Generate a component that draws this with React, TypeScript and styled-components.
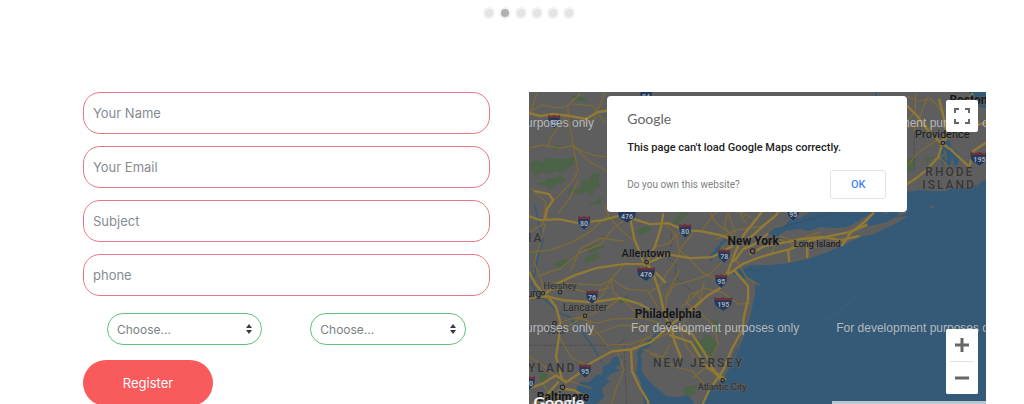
import React from "react";
import styled, { createGlobalStyle, css } from "styled-components";

const GlobalStyle = createGlobalStyle`
  *, *::before, *::after { box-sizing: border-box; }
  body { margin: 0; background: #fff; font-family: Inter, "Open Sans", sans-serif; }
  button, input, select { font: inherit; }
`;

const Page = styled.div`
  display: flex;
  flex-direction: column;
  height: 100vh;
  overflow: hidden;
`;

const Dots = styled.nav`
  display: flex;
  flex-shrink: 0;
  justify-content: center;
  gap: 4px;
  padding: 7px 0 73px 33px;
`;

const Dot = styled.button<{ $active?: boolean }>`
  width: 12px;
  height: 12px;
  padding: 0;
  border: 2px solid #f2f2f2;
  border-radius: 50%;
  background: ${(p) => (p.$active ? "#b0b0b0" : "#e4e4e4")};
`;

const Contact = styled.main`
  display: grid;
  grid-template-columns: minmax(0, 8fr) minmax(0, 9fr);
  column-gap: 39px;
  padding: 0 38px 0 83px;
`;

const Form = styled.form`
  display: flex;
  flex-direction: column;
  gap: 12px;
`;

const Field = styled.input`
  height: 42px;
  padding: 0 9px;
  border: 1px solid #e87884;
  border-radius: 17px;
  outline: none;
  background: #fff;
  color: #495057;
  font-size: 13px;
  &::placeholder { color: #858b91; opacity: 1; }
`;

const SelectRow = styled.div`
  display: grid;
  grid-template-columns: 1fr 1fr;
  padding: 5px 0 3px;
`;

const SelectBox = styled.div`
  display: grid;
  align-items: center;
  margin: 0 24px;
  & > * { grid-area: 1 / 1; }
  svg { justify-self: end; margin-right: 10px; pointer-events: none; z-index: 1; }
`;

const Select = styled.select`
  appearance: none;
  width: 100%;
  height: 32px;
  padding: 0 9px;
  border: 1px solid #66c07c;
  border-radius: 16px;
  background: #fff;
  color: #7b8187;
  font-size: 12px;
`;

const Register = styled.button`
  align-self: flex-start;
  width: 130px;
  height: 46px;
  border: 0;
  border-radius: 23px;
  background: #f95a5c;
  color: #fff;
  font-size: 13px;
`;

const MapPanel = styled.section`
  position: relative;
  min-height: 320px;
  overflow: hidden;
  background: #345a77;
  font-family: Roboto, sans-serif;
`;

const MapArt = styled.svg`
  position: absolute;
  inset: 0;
  width: 100%;
  height: 100%;
`;

const Dialog = styled.div`
  position: absolute;
  top: 4px;
  left: 50%;
  width: 300px;
  transform: translateX(-50%);
  padding: 14px 21px 13px 20px;
  border-radius: 4px;
  background: #fff;
`;

const brand = css`
  font-family: Lato, sans-serif;
  line-height: 18px;
`;

const DialogBrand = styled.div`
  ${brand}
  color: #666;
  font-size: 14px;
`;

const DialogTitle = styled.p`
  margin: 11px 0 13px;
  color: #222;
  font-size: 11px;
  font-weight: 500;
  line-height: 18px;
`;

const DialogFooter = styled.div`
  display: flex;
  align-items: center;
  justify-content: space-between;
`;

const OwnerLink = styled.a`
  color: #808080;
  font-size: 10px;
  text-decoration: none;
`;

const OkButton = styled.button`
  width: 56px;
  height: 29px;
  border: 1px solid #e4e4e4;
  border-radius: 3px;
  background: #fff;
  color: #4a86ee;
  font-size: 11px;
  font-weight: 500;
`;

const Control = styled.button`
  display: grid;
  place-items: center;
  width: 32px;
  height: 32px;
  padding: 0;
  border: 0;
  border-radius: 2px;
  background: #fff;
`;

const FullscreenSlot = styled.div`
  position: absolute;
  top: 8px;
  right: 8px;
`;

const ZoomControls = styled.div`
  position: absolute;
  right: 8px;
  bottom: 18px;
  border-radius: 2px;
  background: #fff;
`;

const Divider = styled.div`
  height: 1px;
  margin: 0 4px;
  background: #e2e2e2;
`;

const MapBrand = styled.a`
  ${brand}
  position: absolute;
  left: 5px;
  bottom: 1px;
  color: #f0f0f0;
  font-size: 16px;
  font-weight: 700;
  text-decoration: none;
`;

const LegalStrip = styled.div`
  position: absolute;
  right: 0;
  bottom: 0;
  width: 154px;
  height: 11px;
  background: #b9c7d1;
`;

const water = [
  // Atlantic, Long Island Sound and the New Jersey shore
  "M986 179L977 185L966 188L953 188L945 191L933 191L920 190L907 192L870 198L830 206L810 212L800 218L791 219L783 227L773 229L768 234L778 236L785 231L790 230L800 229L808 231L820 227L834 228L847 227L858 221L873 212L876 211L867 222L868 226L887 222L895 217L908 216L893 225L873 234L862 236L847 243L827 252L807 259L787 263L767 265L750 265L743 268L735 270L733 272L740 278L752 279L755 283L755 293L751 312L746 330L742 340L735 358L728 370L722 380L710 390L700 403L697 413L986 413Z",
  "M658 331L644 344L637 352L638 362L636 372L641 382L642 393L646 413L700 413L692 400L688 395L675 397L667 396L658 389L648 380L641 370L642 360L640 354L648 347L660 335Z",
  "M575 413L570 404L578 396L576 389L580 382L589 382L597 374L602 375L603 366L610 363L613 357L622 356L620 364L615 368L621 370L612 373L606 378L610 381L602 388L604 397L596 404L594 413Z",
  "M946 132L942 144L940 155L942 166L946 160L948 170L952 158L955 168L959 160L956 150L951 151L950 143Z",
  "M968 92L971 98L979 107L986 108L986 92Z",
  "M710 256L715 249L720 243L724 238L727 240L721 246L717 254L710 262Z",
];

const rivers = [
  "M535 205L539 224L543 240L538 256L535 272L531 284L540 296L549 303L558 312L570 317L582 332L592 345L602 362",
  "M658 333L669 328L678 322",
  "M712 165L710 182L714 203",
  "M875 92L880 110L878 150",
  "M738 340L742 322M729 366L737 348M733 374L742 352",
];

const islands = [
  "M898 212L904 210L906 213L899 216Z",
  "M929 207L933 205L933 209Z",
  "M880 213L886 211L888 214Z",
  "M967 184L973 180L975 183Z",
  "M943 151L945 149L947 158L945 161Z",
];

const greens = [
  "M529 165L536 160L543 163L546 158L555 159L561 160L573 157L575 163L566 169L560 173L556 170L549 174L543 171L535 175ZM553 147L558 145L560 148L555 149Z",
  "M537 184L545 182L548 178L557 178L560 175L565 181L556 184L549 189L544 185ZM568 193L573 187L580 190L584 179L589 182L593 173L599 174L598 181L600 186L594 189L592 195L586 191L578 194L574 191Z",
  "M586 248L599 244L604 247L590 252ZM554 264L566 259L571 261L559 267ZM584 258L597 253L600 257L586 263Z",
  "M620 300L628 295L626 301L620 303ZM636 231L647 226L652 229L640 234ZM676 218L683 211L688 213L678 223L671 225Z",
  "M695 338L702 341L704 335L710 336L717 345L712 357L706 352L699 354L693 345Z",
  "M686 387L696 385L694 393L688 397L683 391ZM644 390L650 386L652 393L645 396ZM541 371L547 375L545 383L540 380ZM713 319L721 326L717 333L713 328Z",
  "M907 160L915 157L913 169L907 172ZM925 159L933 157L927 163ZM572 95L583 98L587 102L575 99ZM589 205L602 198L600 204Z",
];

const majorRoads = [
  "M529 216L540 220L559 219L578 223L603 220L621 215L650 224L668 223L684 230L700 231L720 235L739 242",
  "M545 219L547 209L553 200L549 194L535 191",
  "M529 113L540 116L553 114L570 116L586 119L598 112L612 110",
  "M525 298L546 296L563 300L592 302L620 298L640 304L655 312L670 316",
  "M543 296L556 284L575 275L596 268L623 264L645 264L667 254L690 258L712 257L732 246",
  "M546 297L535 283L529 272M548 296L556 307L560 321L559 337L556 356L562 379",
  "M529 388L543 383L556 375L566 382L578 374L592 362L612 351L632 349L651 342L668 327L681 317L694 307L708 295L720 288L728 271L736 250L744 234L757 218L762 211",
  "M562 386L554 404L552 412M558 382L545 397L530 406M561 388L574 390L585 396",
  "M648 265L654 276L660 294L665 317L671 325L674 340L681 358M655 272L665 282",
  "M735 271L748 286L748 299L744 315L742 330L732 348L723 370L709 390L699 411",
  "M675 326L692 334L704 352L714 370L720 379M670 335L691 342L705 365L725 379",
  "M631 350L632 371L639 386L648 401L649 412",
  "M722 277L731 272L742 264L757 258L770 254L790 249L809 241L829 236L849 232L866 225",
  "M750 254L764 246L781 243L801 239L822 237L841 240L858 236M788 250L789 261M807 245L807 257",
  "M739 244L752 236L765 224L776 215L783 205M734 261L743 249L757 243L767 234",
  "M645 265L655 246L661 227L663 214M630 217L634 238L643 261",
  "M907 106L917 116L928 131L941 143L955 132L966 126L986 123M942 143L938 157L926 170L916 178L907 184",
  "M939 100L943 116L946 132L941 143L951 150L969 167L973 151L985 143M972 94L960 111L944 127",
  "M842 245L850 233L864 222L873 213",
];

const minorRoads = [
  "M529 112L542 105L560 108L567 106L580 94M568 106L568 115L572 137L573 147L592 155L607 157M573 145L578 171L572 182L554 200",
  "M529 148L542 145L560 148L575 145M575 147L590 162L607 171M567 115L552 136L548 145",
  "M574 104L593 106L605 123M605 92L600 106L594 113M537 93L531 110",
  "M531 188L546 202L543 224L529 232M578 180L570 198L558 213M597 117L588 123L582 123",
  "M545 224L539 248L534 262L541 279L545 295M541 275L561 268L579 253L601 244L613 228L626 219",
  "M529 252L550 250L572 242L591 231L607 216M571 270L580 249L600 238L623 241",
  "M605 205L609 217L622 231L633 240M626 262L611 279L602 295L588 310L575 322L559 332M611 280L613 292L629 305L641 319",
  "M553 282L580 284L600 285L612 279L627 289L648 291L657 306M546 291L570 288L591 293L610 287",
  "M620 298L607 308L586 316L570 319L559 323M577 318L597 323L612 319L642 318L661 323",
  "M585 318L595 330L607 345L631 344L652 335M591 335L620 325L649 327",
  "M555 376L543 365L529 356M560 338L572 358L585 364M543 383L552 400M563 379L573 382L591 388",
  "M665 224L676 235L679 250L690 259L702 272L721 282M702 230L713 215L721 207L728 213L735 233",
  "M648 292L660 286L667 272L676 260L682 246L693 233M655 247L669 243L682 229",
  "M664 315L667 297L674 285L690 281L708 275L722 262L730 249M679 270L671 286L665 297",
  "M699 291L689 295L687 303L694 309L701 303L698 294M681 307L703 288L722 292L739 304L749 303",
  "M722 246L735 258L746 277L759 285M727 214L724 226L735 240L746 247L752 233M716 239L735 230L763 226",
  "M704 282L700 301L689 314L680 329L687 348L699 363L719 377M670 344L663 357L643 349",
  "M694 307L714 326L718 344L707 366L693 377M650 353L679 368L691 370L709 389",
  "M617 350L624 370L617 386L609 412M634 350L646 338L658 338L681 326",
  "M734 235L722 228L714 221L709 211M745 222L739 211M751 218L735 208M780 236L794 241L820 232",
  "M770 257L777 239L800 246M789 250L798 238L823 236M808 249L829 242L846 241",
  "M907 96L917 101L931 99L941 111L959 110L968 120L960 130L943 133M927 98L920 116L913 132",
  "M907 127L926 125L938 139L916 154L909 164M915 94L915 111L908 120M939 157L957 177M943 155L929 165",
];

interface Place {
  text: string;
  x: number;
  y: number;
  size?: number;
  weight?: number;
  color?: string;
  dot?: [number, number];
}

const places: Place[] = [
  { text: "New York", x: 753, y: 245, size: 12, weight: 700, dot: [752.5, 251] },
  { text: "Philadelphia", x: 668, y: 318, size: 12, weight: 700, dot: [668.5, 324] },
  { text: "Baltimore", x: 563, y: 401, size: 12, weight: 700, dot: [562.5, 387] },
  { text: "Allentown", x: 646, y: 257, size: 11, weight: 500, dot: [646.5, 262] },
  { text: "Providence", x: 942, y: 138, size: 11, weight: 400, dot: [942.5, 143] },
  { text: "Boston", x: 968, y: 104, size: 12, weight: 700 },
  { text: "Hershey", x: 560, y: 289, size: 9, color: "#2b2b2b", dot: [560, 292] },
  { text: "Lancaster", x: 585, y: 311, size: 10, color: "#2b2b2b", dot: [585, 315.5] },
  { text: "York", x: 555, y: 334, size: 9, color: "#2b2b2b", dot: [554.5, 323] },
  { text: "urg", x: 534, y: 297, size: 10, color: "#222", dot: [543, 293] },
  { text: "Long Island", x: 817, y: 247, size: 9, weight: 500, color: "#222" },
  { text: "Atlantic City", x: 722, y: 390, size: 9, weight: 500, color: "#333", dot: [722.5, 380] },
];

const regions: Place[] = [
  { text: "NEW JERSEY", x: 653, y: 367 },
  { text: "YLAND", x: 528, y: 372 },
  { text: "RHODE", x: 925, y: 176 },
  { text: "ISLAND", x: 922, y: 189 },
  { text: "IA", x: 528, y: 242 },
];

const shields: [string, number, number][] = [
  ["80", 554, 121], ["80", 584, 222], ["476", 627, 215], ["80", 685, 230],
  ["78", 724, 255], ["476", 646, 273], ["95", 721, 280], ["76", 592, 296],
  ["195", 723, 303], ["95", 585, 370], ["70", 529, 382], ["195", 979, 158],
  ["95", 793, 213], ["84", 646, 95],
];

const Shield = ({ label, x, y }: { label: string; x: number; y: number }) => {
  const w = label.length > 2 ? 9 : 6;
  return (
    <g transform={`translate(${x} ${y})`}>
      <path
        d={`M${-w} -5Q${-w - 1} 3 ${-w / 2} 5L0 8L${w / 2} 5Q${w + 1} 3 ${w} -5Z`}
        fill="#24395b"
        stroke="#66707a"
        strokeWidth=".5"
      />
      <path d={`M${-w} -6L${-w / 2} -5L0 -6L${w / 2} -5L${w} -6V-3H${-w}Z`} fill="#6e3236" />
      <text y="3.5" fill="#a5acb4" fontSize="7" fontWeight="700" textAnchor="middle">{label}</text>
    </g>
  );
};

const MapDrawing = () => (
  <MapArt viewBox="529 92 457 320" preserveAspectRatio="xMinYMin slice" role="img" aria-label="Map">
    <rect x="529" y="92" width="460" height="322" fill="#5e5e5e" />
    {greens.map((d) => <path key={d} d={d} fill="#4d6348" strokeLinejoin="round" stroke="#4d6348" />)}
    {water.map((d) => <path key={d} d={d} fill="#345a77" strokeLinejoin="round" />)}
    {islands.map((d) => <path key={d} d={d} fill="#5e5e5e" />)}
    <g fill="none" strokeLinecap="round" strokeLinejoin="round">
      <g stroke="#345a77" strokeWidth="1.4">{rivers.map((d) => <path key={d} d={d} />)}</g>
      <g stroke="#444" strokeWidth=".6" strokeDasharray="3 2">
        <path d="M529 345H618L625 339M624 345L625 370L627 412M670 224L672 242L668 258L676 264L675 277L690 290" />
        <path d="M914 132V170M775 229L800 222L850 208M734 274L750 269L763 272M908 196L914 204" />
      </g>
      <path d="M820 325L860 294" stroke="#45647c" strokeWidth=".6" />
      <g stroke="#7f6b34" strokeWidth="1.2">{minorRoads.map((d) => <path key={d} d={d} />)}</g>
      <g stroke="#917a33" strokeWidth="2.4">{majorRoads.map((d) => <path key={d} d={d} />)}</g>
    </g>
    {shields.map(([label, x, y]) => <Shield key={`${x}-${y}`} label={label} x={x} y={y} />)}
    <g paintOrder="stroke" stroke="#646464" strokeWidth="1" strokeLinejoin="round">
      {regions.map((p) => (
        <text key={p.text} x={p.x} y={p.y} fill="#363636" fontSize="12" fontWeight="500" letterSpacing="2">
          {p.text}
        </text>
      ))}
      {places.map((p) => (
        <text key={p.text} x={p.x} y={p.y} fill={p.color ?? "#171717"} fontSize={p.size} fontWeight={p.weight} textAnchor="middle">
          {p.text}
        </text>
      ))}
    </g>
    {places.map((p) => p.dot && (
      <circle key={p.text} cx={p.dot[0]} cy={p.dot[1]} r={p.weight === 700 ? 2.3 : 1.8} fill="#666" stroke="#222" />
    ))}
    <g fill="#b4b8bb" fontFamily="Liberation Sans, sans-serif" fontSize="12">
      {[127, 332].map((y) => [426, 631, 836].map((x) => (
        <text key={`${x}-${y}`} x={x} y={y}>For development purposes only</text>
      )))}
    </g>
  </MapArt>
);

const Caret = () => (
  <svg width="6" height="10" viewBox="0 0 6 10" fill="#343a40" aria-hidden="true">
    <path d="M0 4L3 0L6 4ZM0 6H6L3 10Z" />
  </svg>
);

const fields = [
  { label: "Your Name", type: "text" },
  { label: "Your Email", type: "email" },
  { label: "Subject", type: "text" },
  { label: "phone", type: "tel" },
];

export default function App() {
  return (
    <>
      <GlobalStyle />
      <Page>
        <Dots aria-label="Slides">
          {[0, 1, 2, 3, 4, 5].map((i) => (
            <Dot key={i} type="button" $active={i === 1} aria-label={`Slide ${i + 1}`} />
          ))}
        </Dots>
        <Contact>
          <Form onSubmit={(e: React.FormEvent) => e.preventDefault()}>
            {fields.map((f) => (
              <Field key={f.label} type={f.type} placeholder={f.label} aria-label={f.label} />
            ))}
            <SelectRow>
              {["First choice", "Second choice"].map((label) => (
                <SelectBox key={label}>
                  <Select aria-label={label}>
                    <option>Choose...</option>
                  </Select>
                  <Caret />
                </SelectBox>
              ))}
            </SelectRow>
            <Register type="submit">Register</Register>
          </Form>
          <MapPanel>
            <MapDrawing />
            <MapBrand href="#map">Google</MapBrand>
            <LegalStrip />
            <Dialog role="dialog" aria-label="Map message">
              <DialogBrand>Google</DialogBrand>
              <DialogTitle>This page can't load Google Maps correctly.</DialogTitle>
              <DialogFooter>
                <OwnerLink href="#owner">Do you own this website?</OwnerLink>
                <OkButton type="button">OK</OkButton>
              </DialogFooter>
            </Dialog>
            <FullscreenSlot>
              <Control type="button" aria-label="Toggle fullscreen">
                <svg width="16" height="16" viewBox="0 0 16 16" fill="none" stroke="#666" strokeWidth="2">
                  <path d="M1 5V1H5M11 1H15V5M15 11V15H11M5 15H1V11" />
                </svg>
              </Control>
            </FullscreenSlot>
            <ZoomControls>
              <Control type="button" aria-label="Zoom in">
                <svg width="16" height="16" viewBox="0 0 16 16" stroke="#666" strokeWidth="3">
                  <path d="M8 1V15M1 8H15" />
                </svg>
              </Control>
              <Divider />
              <Control type="button" aria-label="Zoom out">
                <svg width="16" height="16" viewBox="0 0 16 16" stroke="#666" strokeWidth="3">
                  <path d="M1 8H15" />
                </svg>
              </Control>
            </ZoomControls>
          </MapPanel>
        </Contact>
      </Page>
    </>
  );
}
